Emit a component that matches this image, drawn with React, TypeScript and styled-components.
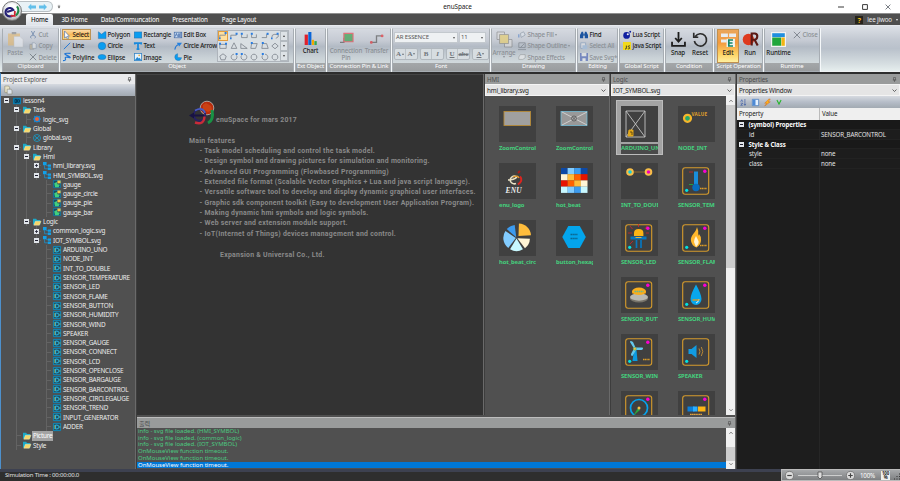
import React from "react";
import styled, { createGlobalStyle, css } from "styled-components";

const Global = createGlobalStyle`
  * { box-sizing: border-box; }
  html, body { margin: 0; padding: 0; background: #333; overflow: hidden; }
  svg { display: block; flex: none; overflow: visible; }
`;

const sans = `"Noto Sans", "Open Sans", "Noto Sans CJK KR", sans-serif`;

const Window = styled.div`
  width: 900px; height: 481px; display: flex; flex-direction: column;
  font: 6.3px/9px ${sans}; letter-spacing: -0.12px; color: #222; white-space: nowrap; overflow: hidden;
  background: #3c3c3c; position: relative;
`;

/* ---------- title and tabs ---------- */
const TitleBar = styled.div`
  height: 13px; background: #fff; display: flex; align-items: center; flex: none;
`;
const TitleText = styled.div`flex: 1; text-align: center; padding-right: 6px; font-size: 6.4px; letter-spacing: -0.1px;`;
const QuickBar = styled.div`
  width: 36px; height: 11px; margin-left: 17px; border: 1px solid #b9c0c4; border-left: 0;
  border-radius: 0 6px 6px 0; background: #e9f2f6; padding-left: 11px; display: flex; align-items: center; gap: 3px;
`;
const QuickMore = styled.div`width: 61px; padding-left: 4px;`;
const WindowButtons = styled.div`
  width: 62px; display: flex; justify-content: space-between; align-items: center; padding-right: 9px; margin-left: 31px;
`;
const TabBar = styled.div`
  height: 12px; border-top: 1px solid #8f8f8f; background: #4f4f4f; color: #ececec; display: flex; flex: none;
  padding-left: 26px; align-items: center;
`;
const Tab = styled.div<{ $w: number; $active?: boolean }>`
  width: ${p => p.$w}px; height: 11px; line-height: 11px; text-align: center; letter-spacing: -0.2px; font-size: 6.2px; font-weight: 500;
  ${p => p.$active && css`background: linear-gradient(#fafbfc, #dfe3e9); color: #111; border-radius: 2px 2px 0 0;`}
`;
const User = styled.div`
  margin-left: auto; display: flex; align-items: center; padding-right: 2px; gap: 4px; font-size: 6.2px;
`;
const Help = styled.div`
  width: 8px; height: 8px; background: #26241c; color: #f3bd1a; font-weight: 700; line-height: 8px; text-align: center; font-size: 7.5px;
`;
const Orb = styled.div`
  position: absolute; left: 2px; top: 1px; width: 20px; height: 20px; border-radius: 50%;
  background: radial-gradient(circle at 50% 35%, #fff 25%, #d3d6d9 60%, #888 100%); border: 1px solid #777;
  display: grid; place-items: center;
`;

/* ---------- ribbon ---------- */
const Ribbon = styled.div`
  height: 47px; flex: none; display: flex; padding: 2px 0 1px 2px; border-top: 1px solid #e6e9ee;
  background: linear-gradient(#dde1e7, #c3c9d2 30%, #b9c1cb 50%, #d7dfe2 85%, #e6eeee);
  border-bottom: 1px solid #eef1f2;
`;
const GroupBox = styled.section<{ $w: number }>`
  width: ${p => p.$w}px; height: 44px; flex: none; display: flex; flex-direction: column;
  border: 1px solid #a7adb3; border-top-color: #ccd1d7; border-radius: 1px; margin-right: 1px;
  box-shadow: 1px 0 0 #f5f8fa;
  background: linear-gradient(#d5d9e0, #c5cad3 28%, #b2bac4 42%, #c9d1d6 68%, #dde5e6);
`;
const GroupBody = styled.div`flex: 1; display: flex; min-height: 0;`;
const GroupLabel = styled.div`
  height: 8px; line-height: 7.5px; flex: none; text-align: center; color: #fff; font-size: 6px; letter-spacing: -0.14px;
  background: linear-gradient(#a4a7a9, #999c9e);
`;
const Rows = styled.div<{ $cols: string; $x?: number }>`
  display: grid; grid-template-columns: ${p => p.$cols}; grid-auto-rows: 11.4px; padding-left: ${p => p.$x ?? 1}px;
`;
const Command = styled.div<{ $off?: boolean; $on?: boolean }>`
  display: flex; align-items: center; gap: 1.5px; height: 11px; padding-left: 1px; font-size: 6.2px; letter-spacing: -0.18px; font-weight: 500;
  color: ${p => (p.$off ? "#8b9095" : "#1c1c20")};
  ${p => p.$off && css`svg { opacity: .55; }`}
  ${p => p.$on && css`background: linear-gradient(#fbe3ba, #f9b95a 50%, #fde08a); outline: 1px solid #bd9354; outline-offset: -1px; width: 29px;`}
`;
const Big = styled.div<{ $w: number; $off?: boolean; $on?: boolean }>`
  width: ${p => p.$w}px; height: 34px; flex: none; display: flex; flex-direction: column; align-items: center; padding-top: 3px;
  color: ${p => (p.$off ? "#8b9095" : "#1c1c20")}; text-align: center; line-height: 7px; font-size: 6.2px; font-weight: 500;
  ${p => p.$off && css`svg { opacity: .65; }`}
  ${p => p.$on && css`background: linear-gradient(#eaa65a, #f39a3e 40%, #fdd264 75%, #fff0a0); border: 1px solid #c09050; padding-top: 2px; margin-left: 2px;`}
  span { margin-top: 2px; display: block; }
`;
const Gallery = styled.div`
  width: 72px; height: 32px; margin-top: 1px; display: flex; border: 1px solid #aeb4bb; background: #d9dfe3;
`;
const Shapes = styled.div`
  width: 62px; display: grid; grid-template-columns: repeat(6, 10.4px); grid-auto-rows: 10.3px;
`;
const ShapeCell = styled.div<{ $on?: boolean }>`
  display: grid; place-items: center;
  ${p => p.$on && css`background: #ffdf9d; box-shadow: inset 0 0 0 1px #e29c3d;`}
`;
const Steps = styled.div`
  width: 8px; display: grid; grid-template-rows: 1fr 1fr 1fr;
  div { border: 1px solid #b3bac0; background: #dde2e6; display: grid; place-items: center; color: #444; }
`;
const FontGroup = styled.div`padding: 3px 0 0 1px; width: 96px;`;
const Line = styled.div`display: flex; gap: 1px; margin-bottom: 5px;`;
const Field = styled.div<{ $w: number }>`
  width: ${p => p.$w}px; height: 11px; background: #eef1f3; border: 1px solid #c3c9ce; line-height: 9px; padding: 0 2px 0 1px;
  display: flex; justify-content: space-between; color: #555; font-size: 6px;
`;
const Caret = styled.i<{ $up?: boolean }>`
  align-self: center; width: 0; height: 0; border: 1.5px solid transparent; flex: none;
  ${p => (p.$up ? css`border-bottom: 2px solid currentColor; border-top: 0;` : css`border-top: 2px solid currentColor; border-bottom: 0;`)}
`;
const Formats = styled.div`
  height: 12px; display: flex; border: 1px solid #b1b8be; border-radius: 2px; margin-right: 1px; background: #d7dde1;
`;
const Format = styled.div<{ $w?: number }>`
  width: ${p => p.$w ?? 11}px; color: #70767c; font: 700 7px/10px "Liberation Serif", serif;
  display: flex; justify-content: center; gap: 1px;
  &:not(:last-child) { border-right: 1px solid #bcc3c8; }
`;

/* ---------- docking area ---------- */
const Workspace = styled.div`height: 397px; display: flex; border-left: 1px solid #4d90cc; border-top: 2px solid #2d2d2d; flex: none;`;
const Column = styled.div<{ $w: number; $bg?: string }>`
  width: ${p => p.$w}px; flex: none; display: flex; flex-direction: column; background: ${p => p.$bg ?? "#505050"}; overflow: hidden;
`;
const PanelTitle = styled.div<{ $light?: boolean }>`
  height: 10px; line-height: 9px; flex: none; display: flex; justify-content: space-between; align-items: center; padding: 0 3px 0 2px;
  background: ${p => (p.$light ? "#e9eaec" : "#999b9b")}; color: ${p => (p.$light ? "#555" : "#4e4e4e")}; font-size: 6.2px;
  word-break: keep-all;
`;
const Combo = styled.div`
  height: 12px; line-height: 11px; flex: none; background: #e5e5e5; border: 1px solid #f4f4f4; color: #222; font-size: 6.3px; letter-spacing: -0.2px; padding: 0 2px 0 1px;
  display: flex; justify-content: space-between; align-items: center;
`;
const Tools = styled.div`
  height: 12px; flex: none; display: flex; align-items: center; gap: 5px; padding-left: 3px;
  background: linear-gradient(#d6dae0, #b6bdc8 50%, #a2aab2);
`;
const Splitter = styled.div`width: 2px; background: #6a6a6a; border-right: 1px solid #3d3d3d; flex: none;`;
const Tree = styled.div`flex: 1; color: #ededed; font-size: 6.4px; letter-spacing: -0.22px;`;
const TreeRow = styled.div`height: 9.32px; line-height: 9.32px; display: flex; align-items: center;`;
const Guide = styled.div<{ $line?: boolean }>`
  width: 10px; height: 100%; flex: none;
  background: ${p => (p.$line ? "linear-gradient(#636363, #636363) 5px 0 / 1px 100% no-repeat" : "none")};
`;
const Toggle = styled.div<{ $root?: boolean }>`
  width: 11px; height: 100%; flex: none; display: grid; place-items: center;
  background: ${p => (p.$root ? "none" : "linear-gradient(#636363, #636363) 5px 0 / 1px 100% no-repeat, linear-gradient(#636363, #636363) 5px 50% / 5px 1px no-repeat")};
`;
const TreeIcon = styled.div`width: 10px; display: grid; place-items: center; flex: none;`;
const TreeName = styled.span<{ $on?: boolean }>`
  margin-left: 1px; ${p => p.$on && css`background: #a3a3a3; color: #fff; box-shadow: -1px 0 0 #a3a3a3, 1px 0 0 #a3a3a3;`}
`;
const Center = styled.div`width: 598px; flex: none; display: flex; flex-direction: column; background: #505050;`;
const Docs = styled.div`height: 341px; display: flex; flex: none;`;
const Canvas = styled.div`
  width: 346px; background: #333; border-top: 1px solid #444; color: #8a8a8a; padding: 18.5px 0 0 52px;
  font: 700 6.9px/10.35px Roboto, sans-serif; letter-spacing: .27px; flex: none;
`;
const Brand = styled.div`display: flex; align-items: flex-end; height: 32px; gap: 1px; padding-bottom: 2px;
  svg { margin-bottom: -1px; } span { line-height: 8px; letter-spacing: .22px; }`;
const Features = styled.div`margin-top: 10px;`;
const Feature = styled.div`padding-left: 10.5px;`;
const Company = styled.div`padding: 10.6px 0 0 31px;`;
const GridArea = styled.div`flex: 1; display: flex; overflow: hidden;`;
const Tiles = styled.div<{ $x: number }>`
  flex: 1; display: grid; grid-template-columns: 57px 57px; grid-auto-rows: 57px; align-content: start; padding: 4px 0 0 ${p => p.$x}px; min-width: 0;
`;
const Tile = styled.div<{ $on?: boolean }>`
  width: 47px; height: 55px; padding: 6px 5px 0;
  ${p => p.$on && css`background: #a3a3a3; box-shadow: inset 0 0 0 1px #bcbcbc;`}
`;
const Picture = styled.div`width: 37px; height: 36px; background: #404040;`;
const TileName = styled.div`
  width: 37px; overflow: hidden; font-weight: 700; font-size: 5.9px; line-height: 9px; height: 11px; padding-top: 2px; color: #45cf7d; letter-spacing: -0.13px;
`;
const SelectedName = styled(TileName)`background: linear-gradient(#a3a3a3 2px, #4a4a4a 2px); color: #47cd7c; height: 12px;`;
const Scroll = styled.div`
  width: 9px; background: #f0f0f0; display: flex; flex-direction: column; align-items: center; justify-content: space-between; color: #444; padding: 3px 0; flex: none;
`;
const Thumb = styled.div<{ $h: number; $top: number; $end?: number }>`
  width: 9px; height: ${p => p.$h}px; margin-top: ${p => p.$top}px; margin-bottom: ${p => p.$end ?? 0}px; background: #cdcdcd;
`;
const Output = styled.div`
  height: 52px; margin-top: 2px; border-top: 1px solid #bdbdbd; display: flex; flex-direction: column; background: #505050;
`;
const LogArea = styled.div`flex: 1; display: flex; min-height: 0;`;
const Log = styled.div`flex: 1; color: #4cc980; font-size: 6px; line-height: 6.73px; letter-spacing: -.02px;`;
const LogLine = styled.div<{ $on?: boolean }>`
  height: 6.73px; padding-left: 1px; ${p => p.$on && css`background: #0078d7; color: #fff;`}
`;
const PropRow = styled.div<{ $kind?: "head" | "group" }>`
  height: ${p => (p.$kind === "head" ? 12 : 9.8)}px; line-height: ${p => (p.$kind === "head" ? 12 : 9.8)}px;
  display: grid; grid-template-columns: 82px 1fr; flex: none; color: #e2e2e2; font-size: 6.2px;
  border-bottom: 1px solid #222;
  ${p => p.$kind === "head" && css`background: #efefef; color: #222; border: 0; div { padding-left: 2px; } div + div { border-left: 1px solid #bbb; }`}
  ${p => p.$kind === "group" && css`font-weight: 700; color: #fff; font-size: 6.1px; background: #191919; letter-spacing: -.08px;`}
`;
const PropCell = styled.div<{ $name?: boolean }>`
  padding-left: ${p => (p.$name ? 12 : 1)}px; display: flex; align-items: center;
  & + & { border-left: 1px solid #262626; }
`;
const PropGroup = styled.div`display: flex; align-items: center; padding-left: 2px; gap: 4.5px;`;
const PropFill = styled.div`flex: 1; display: grid; grid-template-columns: 82px 1fr; div + div { border-left: 1px solid #262626; }`;

const Status = styled.div`
  flex: 1; display: flex; background: linear-gradient(#3d4150 0 3px, #2e2e2e 3px); color: #e2e2e2; font-size: 6px; padding-left: 5px; align-items: center;
  letter-spacing: -.18px;
`;
const ZoomBox = styled.div`
  margin-left: auto; width: 119px; height: 12px; display: flex; align-items: center; gap: 3px; padding: 0 0 0 3px; border: 1px solid #bbb; border-right: 0;
  background: linear-gradient(#a7a9ab, #7e8082); color: #fff; font-size: 6.2px;
`;
const Percent = styled.span`margin: 0 3px 0 2px;`;
const Hundred = styled.div`
  width: 10px; height: 9px; background: #eee; color: #222; font-size: 4.4px; line-height: 4.3px; text-align: center; font-weight: 700; white-space: normal;
`;

/* ---------- drawings ---------- */
const blue = "#0a9df0";
type G = { n: string; s?: number };
const art: Record<string, React.ReactNode> = {
  cursor: <path d="M2 0v9l2-2 1.5 3 1.4-.7L5.500 6.500H8z" fill="#fff" stroke="#456fae" strokeWidth=".8" />,
  line: <path d="M1 9L9 1" stroke="#2277d5" strokeWidth="1.2" />,
  polyline: <path d="M0 9.500q4 0 3-2.500T7 5.500 5 3t4.500-2.500" fill="none" stroke="#2277d5" strokeWidth="1.500" />,
  polygon: <path d="M.5 1l4 3 4-3H10v8.500H.5z" fill={blue} stroke="#246ba8" strokeWidth=".6" />,
  circle: <circle cx="5" cy="5" r="4.700" fill={blue} stroke="#246ba8" strokeWidth=".6" />,
  ellipse: <ellipse cx="5" cy="5" rx="5" ry="3.200" fill={blue} stroke="#246ba8" strokeWidth=".6" />,
  rect: <rect x=".3" y="1.200" width="9.400" height="7.600" fill={blue} stroke="#246ba8" strokeWidth=".6" />,
  text: <path d="M1 3V1.500h8V3M5 1v8M3.200 9h3.600" fill="none" stroke="#1989dc" strokeWidth="2.200" />,
  image: <g><rect x=".5" y=".5" width="9" height="9" fill="#e6f2fb" stroke="#3886c6" /><path d="M1 9l3-4 2 2 1-1 2 3z" fill="#2389d4" /><circle cx="6.500" cy="3" r="1" fill="#e8a93a" /></g>,
  edit: <g><rect x=".3" y="1.500" width="9.400" height="7" fill="#c7dcf2" stroke="#3b62a0" strokeWidth=".8" /><path d="M1.500 7l1.500-4 1.500 4M5.500 3v4h1.500V3M8.500 2v6" stroke="#244f99" strokeWidth=".8" fill="none" /></g>,
  arcEnd: <g><path d="M1 9.500Q1.500 5 5.500 3" fill="none" stroke="#2277d5" strokeWidth="1.300" /><path d="M3.500 1L10 .8 6.500 5.500z" fill="#2380de" /></g>,
  pie: <path d="M4.500 5.500V.8a4.300 4.300 0 1 0 5 5z" fill={blue} stroke="#246ba8" strokeWidth=".5" />,
  cut: <path d="M3 0l3 6M7 0L4 6M3 9a1.300 1.300 0 1 1 1-3M7 9a1.300 1.300 0 1 0-1-3" stroke="#345a8e" fill="none" strokeWidth="1.200" />,
  copy: <g><path d="M1 3h5v6H1z" fill="#c7b489" stroke="#6d7078" strokeWidth=".7" /><path d="M4 1h3l2 2v5H4z" fill="#eceff2" stroke="#5b718c" strokeWidth=".7" /></g>,
  x: <path d="M1 1l8 8M9 1L1 9" stroke="#444b55" strokeWidth="1.200" />,
  paste: <g><path d="M0 1h8v8H0z" fill="#e1b873" /><path d="M2.500 0h3v1.500h-3z" fill="#888" /><path d="M4 3h4l2 2v5H4z" fill="#e8ebf0" stroke="#bbb" strokeWidth=".3" /></g>,
  chart: <g><path d="M.5 2h2.500v8H.5z" fill="#e0202c" /><path d="M3.300 0h2.400v10H3.300z" fill="#0a65d8" /><path d="M6 6h1.700v4H6z" fill="#f5a800" /><path d="M8 7h1.800v3H8z" fill="#32a852" /></g>,
  pin: <g><path d="M0 8h3V5h2" fill="none" stroke="#555" /><path d="M3 1h7v6.500H3z" fill="#2e9c44" stroke="#ea3f48" strokeWidth=".9" /></g>,
  transfer: <g fill="none" stroke="#555"><path d="M1 8h4V3h4" /><circle cx="1" cy="8" r=".6" stroke="#e2252b" /><circle cx="9.300" cy="3" r=".6" stroke="#e2252b" /></g>,
  arrange: <g stroke="#777" strokeWidth=".5"><path d="M0 0h5v5H0z" fill="#ddd" /><path d="M5 5h5v5H5z" fill="#ddd" /><path d="M1.700 1.700h6v6h-6z" fill="#e9cf6d" /></g>,
  fill: <g><path d="M3 3l4-2 2 4-5 3z" fill="#dfe6ee" stroke="#567" strokeWidth=".8" /><path d="M1 4v4" stroke="#356fc4" strokeWidth="1.500" /></g>,
  outline: <path d="M1 1h8v6H1zM3 7l5-5M0 9.500h10" fill="none" stroke="#5c636b" />,
  effect: <path d="M3 2h6v4L6 8H1V5z" fill="#eee" stroke="#666" strokeWidth=".7" />,
  find: <g fill="#1c55a0"><path d="M1 3l1-2h2v8H0V5zM9 3L8 1H6v8h4V5z" /><path d="M4 3h2v3H4z" /></g>,
  all: <g><path d="M1 1h6v7H1z" fill="#eee" stroke="#557bad" strokeWidth=".8" /><path d="M3 4h6v5H3z" fill="#9dbde2" /></g>,
  save: <g><path d="M0 0h10v10H0z" fill="#3550ae" /><path d="M2 0h6v4H2zM3 6.500h4V10H3z" fill="#eee" /></g>,
  lua: <g><circle cx="4.500" cy="5.500" r="4.200" fill="#101fa0" /><circle cx="6" cy="4" r="1.300" fill="#eee" /><circle cx="9" cy="1" r="1.200" fill="#101fa0" /></g>,
  js: <g><rect width="10" height="10" fill="#f2d91c" /><path d="M4.200 4.500V8q0 1-1.700.7M8.800 5C6 4 6 6.300 7.600 6.700S8.500 9 6 8.500" fill="none" stroke="#222" strokeWidth="1" /></g>,
  snap: <path d="M5 0v6M2.800 4L5 6.500 7.200 4M.7 6.500V9.300h8.600V6.500" fill="none" stroke="#1d1d1d" strokeWidth="1.200" />,
  reset: <path d="M1.500 3A4.100 4.100 0 1 1 .9 6M.5.5v3h3" fill="none" stroke="#2c2c2c" strokeWidth="1.100" />,
  editor: <g><path d="M0 1h4.600v2.400H0zM5.400 1H10v2.400H5.400zM0 5h3.800v2H0z" fill="#e9edf0" /><path d="M3.700 4.500h5.600V10H3.700z" fill="#f1f5f3" /><path d="M8 5.300H5.200v4H8M5.200 7.300h2.500" stroke="#138568" fill="none" strokeWidth="1.100" /></g>,
  run: <g><circle cx="3.600" cy="5" r="3.800" fill="#de3a1f" /><path d="M5.800 9V1H8q1.800.3 1.500 2.200T7.500 5.200H6M7.800 5.300L9.800 9" fill="none" stroke="#5b1914" strokeWidth="1.400" /></g>,
  runtime: <g><rect width="10" height="10" fill="#f2f2f2" /><path d="M.8.8h8.400v2.600H.8z" fill="#1f8ede" /><path d="M.8 3.700h6v5.500h-6z" fill="#20a63c" /><path d="M7 3.700h2.200v5.500H7z" fill="#f3b411" /></g>,
  project: <g><path d="M0 1h10v8H0z" fill="#0c7bad" /><path d="M2.500 3h2v4h-2zM5.500 3.500H8v3H5.500z" fill="none" stroke="#072f46" /></g>,
  folder: <g><path d="M0 1h4l1 1.500h4V8H0z" fill="#1ba9c8" /><path d="M1 9l2-5h7L8 9z" fill="#f7d768" stroke="#fbf5cd" strokeWidth=".5" /></g>,
  gear: <g><path d="M5 0l1 1.500L8.500 1 8.700 3.500 10 5 8.700 6.500 8.500 9 6 8.500 5 10 4 8.500 1.500 9 1.300 6.500 0 5l1.300-1.500L1.500 1 4 1.500z" fill="#1788d5" /><circle cx="5" cy="5" r="2.500" fill="#ef6035" /></g>,
  global: <g fill="none" stroke="#179ac9"><circle cx="5" cy="5" r="4.400" /><path d="M2 2l6 6M8 2L2 8M3 5h4" /></g>,
  svg: <g fill="#12a0e8"><path d="M0 0h4.500v4H0zM6 3h4v3H6zM6 7h4v3H6z" /><path d="M2 4v4.500h4M4 4.500h2" fill="none" stroke="#12a0e8" strokeWidth=".8" /></g>,
  gauge: <g><path d="M.5.5h9v9h-9z" fill="#174d66" stroke="#0f81b5" strokeWidth=".9" /><path d="M1.500 4l3.500-1.500v2.500l3.500 1-1.500 3H2.500z" fill="#42d07d" /><path d="M5.500 .5h4V4L5.500 4.500z" fill="#f6c544" /></g>,
  logic: <g fill="none"><path d="M.5.500h9v9h-9z" stroke="#0794cb" strokeWidth="1" fill="#205266" /><path d="M3.200 2.600h1.800q2.600.4 2.600 2.400T5 7.400H3.200z" stroke="#25c4f5" strokeWidth="1.100" /><path d="M1.200 3.800h1.600M1.200 6.300h1.600M8 5h1.300" stroke="#e4d849" /></g>,
  orb: <g fill="none"><path d="M5.500 8a3 3 0 1 1 .4-3.800L1.500 5.700" stroke="#242076" strokeWidth="1.500" /><path d="M4 8.500h3V5" stroke="#cf2634" strokeWidth="1.300" /><path d="M8.500 1.700c2 2 1 5-.7 6.500" stroke="#228948" strokeWidth="1.500" /></g>,
  lessgt: <g stroke="#8a8770" strokeWidth=".7"><path d="M1 0h5l1 2v6H1z" fill="#e7e3c7" /><path d="M4 4h5l1 2v4H4z" fill="#dbe4ee" /></g>,
  sort: <path d="M1 4l1.500-3L4 4M1 6h3L1 9h3M7 0v9M5.500 7L7 9l1.500-2" stroke="#3456a4" fill="none" strokeWidth=".9" />,
  pages: <g><path d="M.5.5h9v9h-9z" fill="#e5f1ff" stroke="#3972ba" /><path d="M1 1h4v8H1z" fill="#4e8ad5" /></g>,
  bolt: <path d="M7 0L1 6h3L1 10l8-6H6l3-4z" fill="#ffb219" stroke="#d75f0b" strokeWidth=".6" />,
  vee: <path d="M1.500 1.500L5 8.500l3.500-7" fill="none" stroke="#22b526" strokeWidth="1.700" />,
  left: <path d="M0 5l4-4v2h6v4H4v2z" fill="#62bfea" />,
  right: <path d="M10 5L6 1v2H0v4h6v2z" fill="#62bfea" />,
  more: <path d="M2 1h6M2.500 4h5L5 8z" fill="#555" stroke="#555" />,
  thumbtack: <path d="M3 1h4v5H3zM1.500 6h7M5 6v4" fill="none" stroke="#555" strokeWidth="1.300" />,
  down: <path d="M1 3l4 4 4-4" fill="none" stroke="#444" strokeWidth="1.600" />,
  up: <path d="M1 7l4-4 4 4" fill="none" stroke="#444" strokeWidth="1.800" />,
  plus: <g><path d="M0 0h10v10H0z" fill="#e1e5ea" /><path d="M2 5h6M5 2v6" stroke="#223" strokeWidth="1.600" /></g>,
  minus: <g><path d="M0 0h10v10H0z" fill="#e1e5ea" /><path d="M2 5h6" stroke="#223" strokeWidth="2" /></g>,
  min: <path d="M0 5h10" stroke="#222" strokeWidth="1.500" />,
  max: <path d="M1 1h8v8H1z" fill="none" stroke="#222" strokeWidth="1.500" />,
  out: <g><circle cx="5" cy="5" r="4.500" fill="#ddd" stroke="#777" /><path d="M2.500 5h5" stroke="#444" strokeWidth="1.300" /></g>,
  in: <g><circle cx="5" cy="5" r="4.500" fill="#ddd" stroke="#777" /><path d="M2.500 5h5M5 2.500v5" stroke="#444" strokeWidth="1.300" /></g>,
};
const Icon = ({ n, s = 8 }: G) => <svg width={s} height={s} viewBox="0 0 10 10">{art[n]}</svg>;

const shapePaths = [
  "M1 8V4h7V2", "M1 8V4h7V2", "M2 3v4h7V3", "M2 3v4h6V3", "M1 7h6V3h2", "M1 7q0-4 3-4h5v3l-3 2",
  "M1 3h8v5H1z", "M5 1l3.500 7h-7z", "M1 2v6h8z", "M2 2h7L7 8H1z", "M2 2h5l2 6H1z", "M5 1.500l4 3.500-4 3.500L1 5z",
  "M5 1l4 3-1.500 4.500h-5L1 4z", "M8 3A3.600 3.600 0 1 1 5 1.500", "M2 3a3.600 3.600 0 1 0 3-1.500", "M5 1.500a3.600 3.600 0 1 1-.1 0z", "M2 3a3.600 3.600 0 1 0 3-1.500", "M5 1.500a3.600 3.600 0 1 1-.1 0z",
];
const handles: Record<number, string> = {
  0: "M7 0h2.500v2.500H7zM0 7h2v2H0z", 1: "M7 1h2.500v2.500H7zM0 7h2v2H0z", 2: "M1 1h2.500v2.500H1z", 3: "M1 1h2.500v2.500H1z", 4: "M7 1h2.500v2.500H7z", 5: "M7 1h2.500v2.500H7zM0 7h2v2H0z",
  6: "M0 1h2.500v2.500H0zM7.500 1H10v2.500H7.500z", 9: "M1 0h2.500v2.500H1z", 10: "M1 0h2.500v2.500H1z", 13: "M7 0h2.500v2.500H7z", 14: "M1 0h2.500v2.500H1z", 16: "M1 0h2.500v2.500H1z",
};

function Group({ w, label, children }: { w: number; label: string; children: React.ReactNode }) {
  return <GroupBox $w={w}><GroupBody>{children}</GroupBody><GroupLabel>{label}</GroupLabel></GroupBox>;
}
const Cmd = ({ n, t, off, on, menu }: { n: string; t: string; off?: boolean; on?: boolean; menu?: boolean }) => (
  <Command $off={off} $on={on}><Icon n={n} />{t}{menu && <Caret />}</Command>
);

/* ---------- symbol thumbnails ---------- */
const Frame = ({ pink = true, cyan = true, children }: { pink?: boolean; cyan?: boolean; children: React.ReactNode }) => (
  <g>
    <rect x="4.700" y="4.700" width="26" height="26.500" rx="2.500" fill="none" stroke="#d59b2c" strokeWidth="1.100" />
    {children}
    {pink && <circle cx="26.800" cy="8.300" r="1.700" fill="#fb00d2" />}
    {cyan && <circle cx="8.700" cy="27.300" r="1.600" fill="#00e2e2" />}
  </g>
);
const Value = () => <path d="M22 25.500h7" stroke="#dc9b26" strokeWidth="1.700" strokeDasharray="1.300 .4" />;
const slice = (a: number, b: number, ox: number, oy: number) => {
  const r = 12.5, f = (t: number) => [17.5 + ox + r * Math.cos((t * Math.PI) / 180), 18 + oy + r * Math.sin((t * Math.PI) / 180)];
  const [x1, y1] = f(a), [x2, y2] = f(b);
  return `M${17.5 + ox} ${18 + oy}L${x1} ${y1}A${r} ${r} 0 0 1 ${x2} ${y2}z`;
};
const heat = ["#0d49a5", "#3c9bef", "#82ccff", "#c8f8ff", "#fff5d6", "#ffbc39", "#ff6200", "#e61300"];
const heatRows = [0, 2, 1, 0, 4, 5, 6, 7, 7, 6, 5, 4, 3, 2, 1, 3];
const thumbs: Record<string, React.ReactNode> = {
  rect: <rect x="5" y="5.500" width="26.500" height="14" fill="#a0a0a0" stroke="#b58a39" strokeWidth=".9" />,
  zoom: <g stroke="#ddd" strokeWidth=".8" fill="none"><rect x="5" y="5.500" width="26" height="14" fill="#999" stroke="#74bdd8" /><path d="M6 6l25 13M31 6L6 19" /><circle cx="18" cy="12.500" r="2.500" fill="#aaa" stroke="#555" /><path d="M16.500 11l3 3m0-3l-3 3" stroke="#555" /></g>,
  enu: <g><path d="M9 17q6 0 9-3M17 20.500a4.200 3.800 0 1 1 0-7" fill="none" stroke="#e9e1c4" strokeWidth="1.600" /><path d="M14 14q5-2 6 1" fill="none" stroke="#e39a2c" strokeWidth="1.300" /><path d="M21 13.500q3.500 4-2 8" fill="none" stroke="#dc2520" strokeWidth="2" /><path d="M19 10l2-2" stroke="#a91d19" strokeWidth="2" /><text x="6.500" y="29.500" fontFamily="Liberation Serif, serif" fontStyle="italic" fontWeight="700" fontSize="7.500" fill="#eee" textLength="16">ENU</text></g>,
  heat: <g>{heatRows.map((c, i) => <rect key={i} x={5 + (i % 4) * 6.600} y={5 + Math.floor(i / 4) * 6.200} width="6.700" height="6.300" fill={heat[c]} />)}</g>,
  circle: <g><path d={slice(-88, -4, 2, -2)} fill="#ffbd3c" /><path d={slice(2, 53, .9, .3)} fill="#fff5d6" /><path d={slice(59, 121, 0, .6)} fill="#c8f8ff" /><path d={slice(127, 214, -.7, 0)} fill="#82ccff" /><path d={slice(221, 263, -.3, -.7)} fill="#3c9bef" /></g>,
  hex: <g><path d="M12.300 6h11.500l6 11-6 11H12.300l-6-11z" fill="#03a5ec" /><path d="M14.500 14.500h7M14.500 18.500h7" stroke="#0b668f" strokeWidth="1.300" strokeDasharray="1.500 .4" /></g>,
  arduino: <g fill="none" stroke="#c3c3c3" strokeWidth=".9"><path d="M5 5h19v26H5zM5 5l19 26M24 5L5 31" /><path d="M8 24h4v6H7z" fill="#e2a81a" stroke="#e2a81a" /><path d="M9 26h2v3" stroke="#594411" /></g>,
  node: <g><circle cx="9.500" cy="12.300" r="3.500" fill="#25a96c" stroke="#f6b62b" strokeWidth="2.200" /><text x="13.500" y="10" fontFamily="Noto Sans, sans-serif" fontWeight="700" fontSize="4.600" fill="#e0a02b" textLength="15.500">VALUE</text></g>,
  double: <g><path d="M12 9h12" stroke="#8a6930" /><circle cx="9" cy="9" r="2.800" fill="#14cddd" stroke="#f7be48" strokeWidth="2" /><circle cx="27.500" cy="9" r="2.800" fill="#ef00ba" stroke="#f7be48" strokeWidth="2" /></g>,
  temp: <Frame><path d="M16 8.500h4v14h-4z" fill="#198edb" /><circle cx="18" cy="24.500" r="3.700" fill="#086dc0" /><path d="M11 9h4" stroke="#b52c2c" /><path d="M11 21.500h4" stroke="#229e43" /><Value /></Frame>,
  led: <Frame><path d="M13 16v-3q0-4 4.700-4t4.700 4v3z" fill="#fdb515" /><path d="M9.500 16.500h16v3h-16z" fill="#0777c0" /><path d="M15.500 20v8M20 20v8" stroke="#0777c0" strokeWidth="1.700" /><path d="M17.500 4v3M9 6l2.500 3M24 9l2-3M7 13h4M25 13h3M9 24l3-3" stroke="#d42527" strokeWidth=".8" /><path d="M14.500 17.500h6" stroke="#e3b540" /></Frame>,
  flame: <Frame><path d="M19 7c-1 6-7 8-6 14q1 5 5.500 6.500Q23 25 23 20q0-4-2-6l-.8 2Q21 11 19 7z" fill="#ffb72c" /><path d="M18 16q-2 3-2 6l2 5q4-4 2-7z" fill="#fff4d5" /><Value /></Frame>,
  button: <Frame cyan={false}><ellipse cx="18" cy="21.500" rx="9" ry="4" fill="#77736a" /><ellipse cx="18" cy="20" rx="9" ry="3.700" fill="#b9b9b1" /><path d="M11 14h14v2.500H11z" fill="#d98b12" /><ellipse cx="18" cy="14.300" rx="7" ry="3.700" fill="#f9ae1d" /><path d="M13.500 14.500h9" stroke="#69b78e" strokeWidth="1.400" strokeDasharray="1.600 .5" /></Frame>,
  humid: <Frame><path d="M18 7.500q-5.500 10-5.500 14.500a5.500 6 0 0 0 11 0Q23.500 17.500 18 7.500z" fill="#08a7ed" /><path d="M21 22q-1 4-3 4" stroke="#e5f6ff" fill="none" /><path d="M14.500 23h7" stroke="#d99b23" strokeWidth="1.400" /></Frame>,
  wind: <Frame><path d="M11.500 27l1.500-11h2.500l1 11z" fill="#0b9be1" /><path d="M13 14.500L9 8q0-2 3 0l2.500 5.500h7q1.500 1.500-1 2.500H15l-3.500 6q-2 0-1.500-2z" fill="#62c8ef" /><circle cx="13.800" cy="14.800" r="1.500" fill="#f6c143" stroke="#63af65" strokeWidth=".7" /><Value /></Frame>,
  speaker: <Frame pink={false}><path d="M10.500 15h3l5-4v13l-5-4h-3z" fill="#119be1" /><path d="M21 14.500q2 3 0 6M23.300 13q3 4.500 0 9" fill="none" stroke="#c28e36" strokeWidth=".9" /></Frame>,
  gauge: <Frame><circle cx="18" cy="17" r="8.500" fill="none" stroke="#05a2ed" strokeWidth="1.700" /><path d="M12 25l5-8 2 2z" fill="#28a33e" /><circle cx="18" cy="17" r="1.500" fill="#f8bf44" /></Frame>,
  connect: <Frame><path d="M9.500 15.500h7v5h-7z" fill="#0b7fd8" /><path d="M15 15.500h4.500v5H15z" fill="#2cafff" /><path d="M20 15.500h7.500v5H20z" fill="#fdb515" /><path d="M12 23.500h12" stroke="#e1a33e" strokeWidth="1.300" strokeDasharray="1.500 .3" /></Frame>,
};
const hmi = [["rect", "ZoomControl"], ["zoom", "ZoomControl2"], ["enu", "enu_logo"], ["heat", "hot_beat"], ["circle", "hot_beat_circle"], ["hex", "button_hexagon"]];
const iot = [["arduino", "ARDUINO_UNO"], ["node", "NODE_INT"], ["double", "INT_TO_DOUBLE"], ["temp", "SENSOR_TEMPERATURE"], ["led", "SENSOR_LED"], ["flame", "SENSOR_FLAME"], ["button", "SENSOR_BUTTON"], ["humid", "SENSOR_HUMIDITY"], ["wind", "SENSOR_WIND"], ["speaker", "SPEAKER"], ["gauge", ""], ["connect", ""]];

function TileList({ items, x, selected }: { items: string[][]; x: number; selected?: number }) {
  return (
    <Tiles $x={x}>
      {items.map(([k, name], i) => (
        <Tile key={i} $on={i === selected}>
          <Picture><svg width="37" height="36" viewBox="0 0 37 36">{thumbs[k]}</svg></Picture>
          {i === selected ? <SelectedName>{name}</SelectedName> : <TileName>{name}</TileName>}
        </Tile>
      ))}
    </Tiles>
  );
}

/* ---------- project tree ---------- */
type Node = [number, string, string, string?];
const tree: Node[] = [
  [0, "project", "lesson4", "minus"], [1, "folder", "Task", "minus"], [2, "gear", "logic_svg"], [1, "folder", "Global", "minus"], [2, "global", "global.svg"],
  [1, "folder", "Library", "minus"], [2, "folder", "Hmi", "minus"], [3, "svg", "hmi_library.svg", "plus"], [3, "svg", "HMI_SYMBOL.svg", "minus"],
  [4, "gauge", "gauge"], [4, "gauge", "gauge_circle"], [4, "gauge", "gauge_pie"], [4, "gauge", "gauge_bar"],
  [2, "folder", "Logic", "minus"], [3, "svg", "common_logic.svg", "plus"], [3, "svg", "IOT_SYMBOL.svg", "minus"],
  ...["ARDUINO_UNO", "NODE_INT", "INT_TO_DOUBLE", "SENSOR_TEMPERATURE", "SENSOR_LED", "SENSOR_FLAME", "SENSOR_BUTTON", "SENSOR_HUMIDITY", "SENSOR_WIND", "SPEAKER", "SENSOR_GAUGE", "SENSOR_CONNECT", "SENSOR_LCD", "SENSOR_OPENCLOSE", "SENSOR_BARGAUGE", "SENSOR_BARCONTROL", "SENSOR_CIRCLEGAUGE", "SENSOR_TREND", "INPUT_GENERATOR", "ADDER"].map(t => [4, "logic", t] as Node),
  [1, "folder", "Picture"], [1, "folder", "Style"],
];
const continues = (i: number, level: number) => {
  for (let j = i + 1; j < tree.length; j++) {
    if (tree[j][0] < level) return false;
    if (tree[j][0] === level) return true;
  }
  return false;
};

const features = [
  "- Task model scheduling and control the task model.",
  "- Design symbol and drawing pictures for simulation and monitoring.",
  "- Advanced GUI Programming (Flowbased Programming)",
  "- Extended file format (Scalable Vector Graphics + Lua and java script language).",
  "- Versatile software tool to develop and display dynamic graphical user interfaces.",
  "- Graphic sdk component toolkit (Easy to development User Application Program).",
  "- Making dynamic hmi symbols and logic symbols.",
  "- Web server and extension module support.",
  "- IoT(Internet of Things) devices management and control.",
];
const log = ["info - svg file loaded. (HMI_SYMBOL)", "info - svg file loaded. (common_logic)", "info - svg file loaded. (IOT_SYMBOL)", "OnMouseView function timeout.", "OnMouseView function timeout.", "OnMouseView function timeout."];

export default function App() {
  return (
    <>
      <Global />
      <Window>
        <TitleBar>
          <QuickBar><Icon n="left" /><Icon n="right" /></QuickBar>
          <QuickMore><Icon n="more" s={4} /></QuickMore>
          <TitleText>enuSpace</TitleText>
          <WindowButtons><Icon n="min" s={6} /><Icon n="max" s={6} /><Icon n="x" s={6} /></WindowButtons>
        </TitleBar>
        <TabBar>
          <Tab $w={27} $active>Home</Tab><Tab $w={43}>3D Home</Tab><Tab $w={68}>Data/Communcation</Tab><Tab $w={52}>Presentation</Tab><Tab $w={46}>Page Layout</Tab>
          <User><Help>?</Help>lee jiwoo<Caret /></User>
        </TabBar>
        <Ribbon>
          <Group w={57} label="Clipboard">
            <Big $w={24} $off><Icon n="paste" s={15} /><span>Paste</span></Big>
            <Rows $cols="30px"><Cmd n="cut" t="Cut" off /><Cmd n="copy" t="Copy" off /><Cmd n="x" t="Delete" off /></Rows>
          </Group>
          <Group w={234} label="Object">
            <Rows $cols="35px 36px 40px 44px">
              <Cmd n="cursor" t="Select" on /><Cmd n="polygon" t="Polygon" /><Cmd n="rect" t="Rectangle" /><Cmd n="edit" t="Edit Box" />
              <Cmd n="line" t="Line" /><Cmd n="circle" t="Circle" /><Cmd n="text" t="Text" /><Cmd n="arcEnd" t="Circle Arrow" />
              <Cmd n="polyline" t="Polyline" /><Cmd n="ellipse" t="Ellipse" /><Cmd n="image" t="Image" /><Cmd n="pie" t="Pie" />
            </Rows>
            <Gallery>
              <Shapes>
                {shapePaths.map((d, i) => (
                  <ShapeCell key={i} $on={i === 0}>
                    <svg width="8" height="8" viewBox="0 0 10 10"><path d={d} fill="none" stroke="#7b828a" strokeWidth="1" />{handles[i] && <path d={handles[i]} fill="#2a7de1" />}</svg>
                  </ShapeCell>
                ))}
              </Shapes>
              <Steps><div><Caret $up /></div><div><Caret /></div><div><Caret /></div></Steps>
            </Gallery>
          </Group>
          <Group w={31} label="Ext Object"><Big $w={29}><Icon n="chart" s={13} /><span>Chart</span></Big></Group>
          <Group w={64} label="Connection Pin & Link">
            <Big $w={36} $off><Icon n="pin" s={13} /><span>Connection<br />Pin</span></Big><Big $w={25} $off><Icon n="transfer" s={13} /><span>Transfer</span></Big>
          </Group>
          <Group w={98} label="Font">
            <FontGroup>
              <Line><Field $w={64}>AR ESSENCE<Caret /></Field><Field $w={27}>11<Caret /></Field></Line>
              <Line>
                <Formats><Format>A<Caret $up /></Format><Format>A<Caret /></Format></Formats>
                <Formats><Format>B</Format><Format><em>I</em></Format></Formats>
                <Formats><Format><u>U</u></Format><Format><s>abc</s></Format></Formats>
                <Formats><Format $w={15}><u>A</u><Caret /></Format></Formats>
              </Line>
            </FontGroup>
          </Group>
          <Group w={85} label="Drawing">
            <Big $w={24} $off><Icon n="arrange" s={15} /><span>Arrange</span><Caret /></Big>
            <Rows $cols="58px" $x={1}><Cmd n="fill" t="Shape Fill" off menu /><Cmd n="outline" t="Shape Outline" off menu /><Cmd n="effect" t="Shpae Effects" off /></Rows>
          </Group>
          <Group w={41} label="Editing"><Rows $cols="38px"><Cmd n="find" t="Find" /><Cmd n="all" t="Select All" off /><Cmd n="save" t="Save Svg*" off /></Rows></Group>
          <Group w={45} label="Global Script"><Rows $cols="41px" $x={2}><Cmd n="lua" t="Lua Script" /><Cmd n="js" t="Java Script" /></Rows></Group>
          <Group w={48} label="Condition"><Big $w={24}><Icon n="snap" s={15} /><span>Snap</span></Big><Big $w={20}><Icon n="reset" s={15} /><span>Reset</span></Big></Group>
          <Group w={49} label="Script Operation"><Big $w={22} $on><Icon n="editor" s={15} /><span>Edit</span></Big><Big $w={22}><Icon n="run" s={15} /><span>Run</span></Big></Group>
          <Group w={56} label="Runtime"><Big $w={27}><Icon n="runtime" s={15} /><span>Runtime</span></Big><Rows $cols="25px" $x={0}><Cmd n="x" t="Close" off /></Rows></Group>
        </Ribbon>

        <Workspace>
          <Column $w={134}>
            <PanelTitle $light><span>Project Explorer</span><Icon n="thumbtack" s={5} /></PanelTitle>
            <Tools><Icon n="lessgt" /></Tools>
            <Tree>
              {tree.map(([depth, icon, name, toggle], i) => (
                <TreeRow key={i}>
                  {Array.from({ length: depth }, (_, l) => <Guide key={l} $line={l > 0 && continues(i, l)} />)}
                  <Toggle $root={depth === 0}>{toggle && <Icon n={toggle} s={5} />}</Toggle>
                  <TreeIcon><Icon n={icon} /></TreeIcon>
                  <TreeName $on={name === "Picture"}>{name}</TreeName>
                </TreeRow>
              ))}
            </Tree>
          </Column>
          <Splitter />
          <Center>
            <Docs>
              <Canvas>
                <Brand>
                  <svg width="26" height="25" viewBox="0 0 26 25">
                    <circle cx="18" cy="8" r="6.800" fill="#b92d0d" stroke="#bbb" strokeWidth=".8" />
                    <path d="M14 5l3-2 5 3 1 4-4 2-5-3z" fill="#ef6723" opacity=".35" />
                    <ellipse cx="10.500" cy="15" rx="5.800" ry="5.800" fill="none" stroke="#272066" strokeWidth="1.900" />
                    <path d="M6 10.500q8-4 10 2.500" fill="none" stroke="#4c5fc4" strokeWidth="1.800" />
                    <path d="M0 15.500l5-3v2h10v2H5v2z" fill="#181343" />
                    <path d="M6 22.500q9 3 9.500-6" fill="none" stroke="#c92b39" strokeWidth="2.400" />
                    <path d="M23 10q2 10-4 13" fill="none" stroke="#189244" strokeWidth="3" />
                  </svg>
                  <span>enuSpace for mars 2017</span>
                </Brand>
                <Features>Main features{features.map(t => <Feature key={t}>{t}</Feature>)}</Features>
                <Company>Expansion &amp; Universal Co., Ltd.</Company>
              </Canvas>
              <Splitter />
              <Column $w={124}>
                <PanelTitle><span>HMI</span><Icon n="thumbtack" s={5} /></PanelTitle>
                <Combo>hmi_library.svg<Icon n="down" s={5} /></Combo>
                <GridArea><TileList items={hmi} x={9} /></GridArea>
              </Column>
              <Splitter />
              <Column $w={124}>
                <PanelTitle><span>Logic</span><Icon n="thumbtack" s={5} /></PanelTitle>
                <Combo>IOT_SYMBOL.svg<Icon n="down" s={5} /></Combo>
                <GridArea>
                  <TileList items={iot} x={5} selected={0} />
                  <Scroll><Icon n="up" s={4} /><Thumb $h={163} $top={2} $end={140} /><Icon n="down" s={4} /></Scroll>
                </GridArea>
              </Column>
            </Docs>
            <Output>
              <PanelTitle><span>출력</span><Icon n="thumbtack" s={5} /></PanelTitle>
              <LogArea>
                <Log>{log.map((t, i) => <LogLine key={i} $on={i === 5}>{t}</LogLine>)}</Log>
                <Scroll><Icon n="up" s={4} /><Thumb $h={14} $top={10} /><Icon n="down" s={4} /></Scroll>
              </LogArea>
            </Output>
          </Center>
          <Splitter />
          <Column $w={163} $bg="#1d1d1d">
            <PanelTitle><span>Properties</span><Icon n="thumbtack" s={5} /></PanelTitle>
            <Combo>Properties Window<Icon n="down" s={5} /></Combo>
            <Tools><Icon n="sort" s={7} /><Icon n="pages" s={7} /><Icon n="bolt" s={7} /><Icon n="vee" s={6} /></Tools>
            <PropRow $kind="head"><div>Property</div><div>Value</div></PropRow>
            <PropRow $kind="group"><PropGroup><Icon n="minus" s={5} />(symbol) Properties</PropGroup></PropRow>
            <PropRow><PropCell $name>id</PropCell><PropCell>SENSOR_BARCONTROL</PropCell></PropRow>
            <PropRow $kind="group"><PropGroup><Icon n="minus" s={5} />Style &amp; Class</PropGroup></PropRow>
            <PropRow><PropCell $name>style</PropCell><PropCell>none</PropCell></PropRow>
            <PropRow><PropCell $name>class</PropCell><PropCell>none</PropCell></PropRow>
            <PropFill><div /><div /></PropFill>
          </Column>
        </Workspace>
        <Status>
          Simulation Time : 00:00:00.0
          <ZoomBox>
            <Icon n="out" s={9} />
            <svg width="46" height="9" viewBox="0 0 46 9"><path d="M1 4.500h44" stroke="#ddd" strokeWidth=".8" /><path d="M21 1h4v5l-2 2-2-2z" fill="#ddd" stroke="#444" strokeWidth=".7" /></svg>
            <Icon n="in" s={9} /><Percent>100%</Percent><Hundred>100 %</Hundred>
            <svg width="7" height="9" viewBox="0 0 7 9"><path d="M1 8h1M3.500 8h1M6 8h1M3.500 5.500h1M6 5.500h1M6 3h1" stroke="#333" strokeWidth="1.200" /></svg>
          </ZoomBox>
        </Status>
        <Orb><Icon n="orb" s={14} /></Orb>
      </Window>
    </>
  );
}
